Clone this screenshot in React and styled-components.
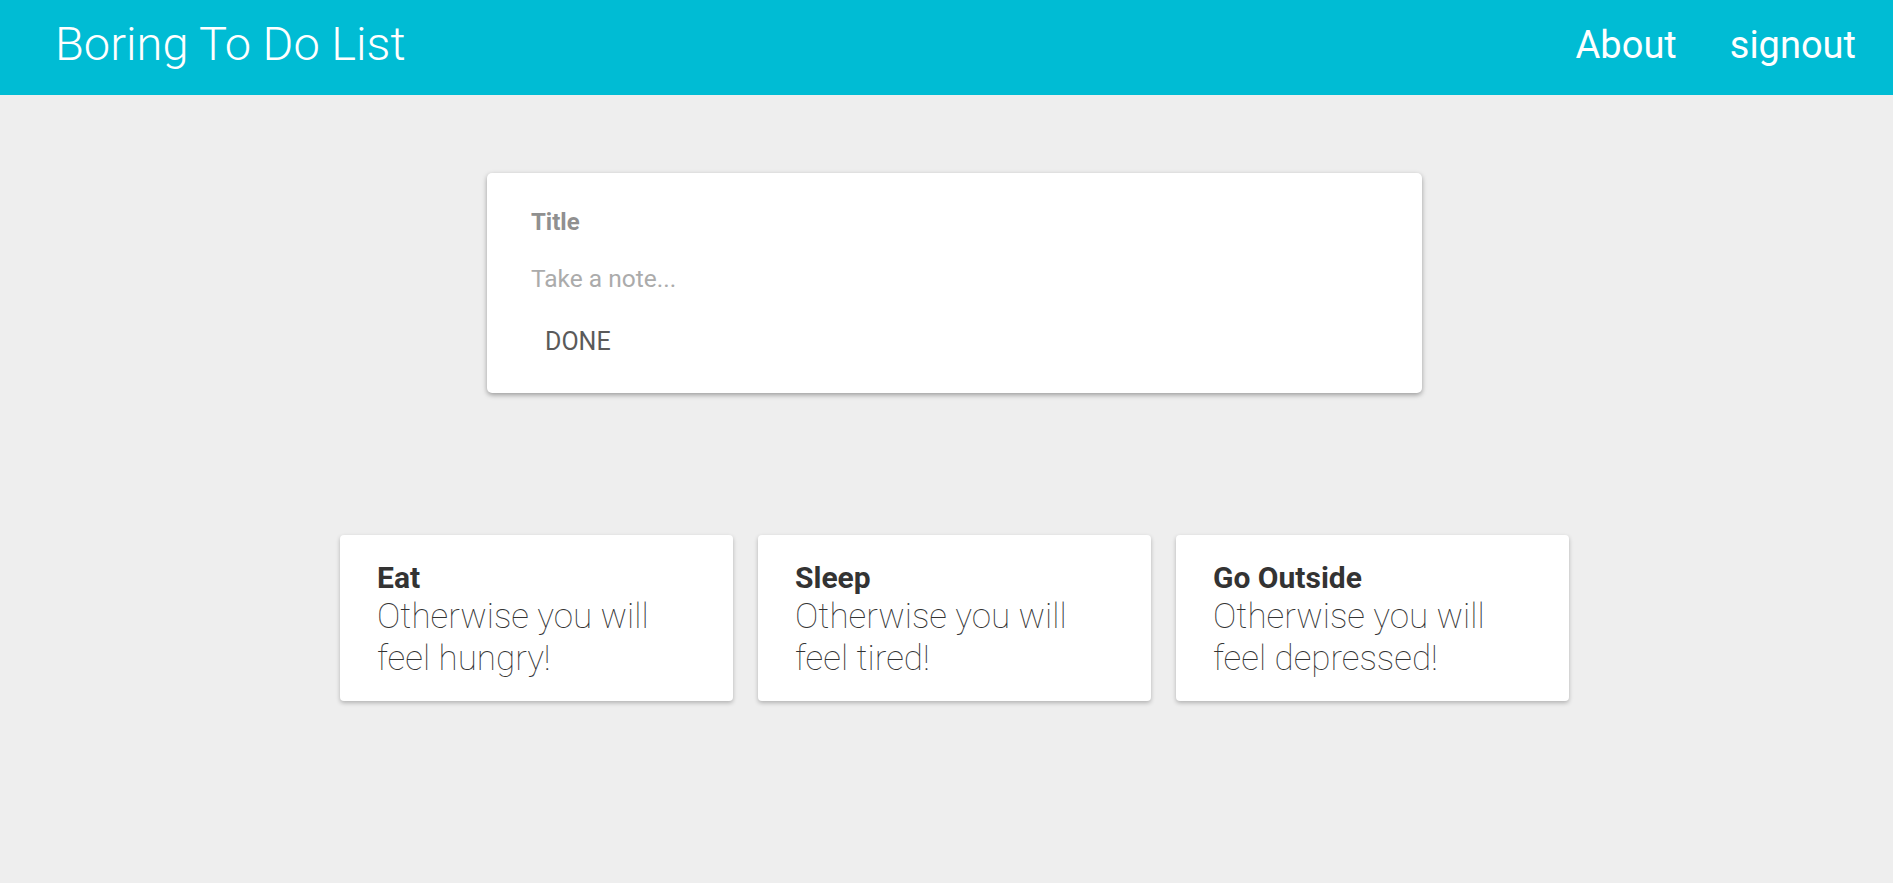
import React from "react";
import styled, { createGlobalStyle } from "styled-components";

const notes = [
  { title: "Eat", content: "Otherwise you will feel hungry!" },
  { title: "Sleep", content: "Otherwise you will feel tired!" },
  { title: "Go Outside", content: "Otherwise you will feel depressed!" },
];

const App = () => {
  return (
    <Page>
      <GlobalStyle />
      <Header>
        <h1>Boring To Do List</h1>
        <nav>
          <a href="#about">About</a>
          <a href="#signout">signout</a>
        </nav>
      </Header>
      <Main>
        <CreateArea>
          <TitleInput placeholder="Title" />
          <NoteInput placeholder="Take a note..." />
          <DoneButton>DONE</DoneButton>
        </CreateArea>
        <NoteList>
          {notes.map((note) => (
            <Note key={note.title}>
              <h1>{note.title}</h1>
              <p>{note.content}</p>
            </Note>
          ))}
        </NoteList>
      </Main>
    </Page>
  );
};

export default App;

const GlobalStyle = createGlobalStyle`
  * {
    box-sizing: border-box;
  }

  body {
    margin: 0;
    background: #eeeeee;
    font-family: Roboto, "Liberation Sans", sans-serif;
  }
`;

const Page = styled.div`
  min-height: 100vh;
`;

const Header = styled.header`
  height: 95px;
  background: #00bcd4;
  display: flex;
  align-items: center;
  justify-content: space-between;
  padding: 0 37px 0 55px;
  color: #fff;

  h1 {
    margin: 0;
    font-size: 47px;
    font-weight: 300;
    line-height: 1;
    padding-bottom: 9px;
  }

  nav {
    display: flex;
    gap: 53px;
    padding-bottom: 6px;
  }

  a {
    color: #fff;
    text-decoration: none;
    font-size: 38px;
    font-weight: 400;
    line-height: 1;
  }
`;

const Main = styled.main`
  margin-left: 16px;
  display: flex;
  flex-direction: column;
  align-items: center;
  padding-top: 78px;
`;

const CreateArea = styled.form`
  width: 935px;
  height: 220px;
  background: #fff;
  border-radius: 5px;
  box-shadow: 0 2px 5px rgba(0, 0, 0, 0.35);
  padding: 37px 44px 0;
  display: flex;
  flex-direction: column;
  align-items: flex-start;
`;

const TitleInput = styled.input`
  border: none;
  outline: none;
  padding: 0;
  width: 100%;
  font-family: inherit;
  font-size: 24px;
  font-weight: 700;
  line-height: 1;
  height: 24px;

  &::placeholder {
    color: #909090;
  }
`;

const NoteInput = styled.input`
  border: none;
  outline: none;
  padding: 0;
  width: 100%;
  margin-top: 32px;
  font-family: inherit;
  font-size: 24.5px;
  line-height: 1;
  height: 24px;

  &::placeholder {
    color: #ababab;
  }
`;

const DoneButton = styled.button`
  margin-top: 39px;
  border: none;
  background: none;
  padding: 0 14px;
  font-family: inherit;
  font-size: 25px;
  line-height: 1;
  color: #5a5a5a;
  cursor: pointer;
`;

const NoteList = styled.div`
  display: flex;
  gap: 25px;
  margin-top: 142px;
`;

const Note = styled.div`
  width: 393px;
  background: #fff;
  border-radius: 4px;
  box-shadow: 0 2px 4px rgba(0, 0, 0, 0.25);
  padding: 25px 37px 21px;
  color: #333;

  h1 {
    margin: 0;
    font-size: 30px;
    font-weight: 700;
    line-height: 36px;
  }

  p {
    margin: 0;
    font-size: 35px;
    font-weight: 100;
    line-height: 42px;
  }
`;
